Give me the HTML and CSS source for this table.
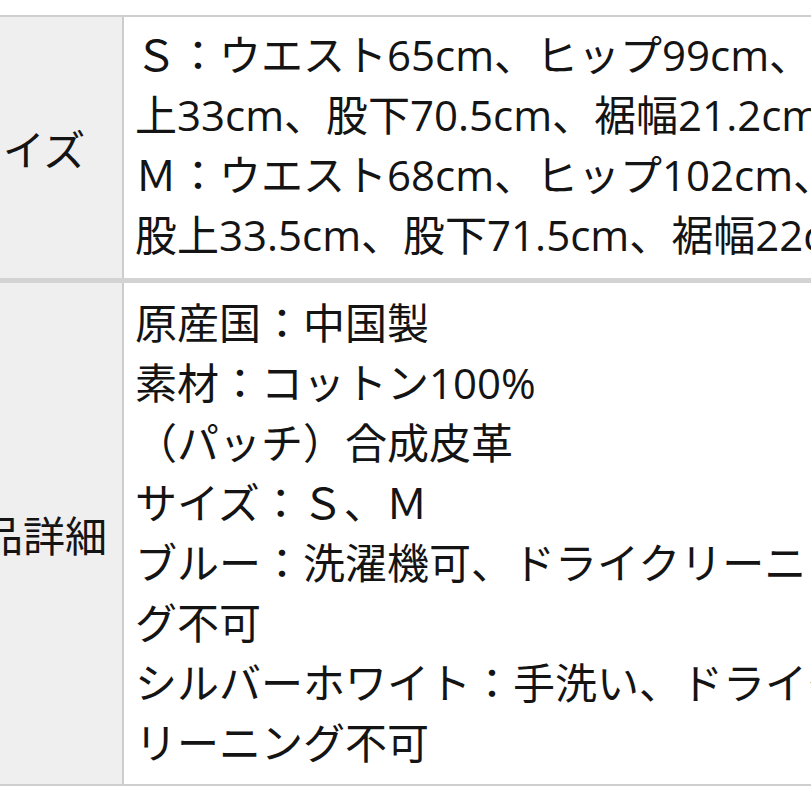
FILE: index.html
```html
<!DOCTYPE html>
<html lang="ja">
<head>
<meta charset="utf-8">
<title>商品情報</title>
<link rel="stylesheet" href="styles.css">
</head>
<body>
<div class="spec">
  <div class="row row-size">
    <div class="label">サイズ</div>
    <div class="value">
      <div class="line">Ｓ：ウエスト65cm、ヒップ99cm、股</div>
      <div class="line">上33cm、股下70.5cm、裾幅21.2cm、</div>
      <div class="line">Ｍ：ウエスト68cm、ヒップ102cm、</div>
      <div class="line">股上33.5cm、股下71.5cm、裾幅22cm</div>
    </div>
  </div>
  <div class="row row-detail">
    <div class="label">商品詳細</div>
    <div class="value">
      <div class="line">原産国：中国製</div>
      <div class="line">素材：コットン100%</div>
      <div class="line">（パッチ）合成皮革</div>
      <div class="line">サイズ：Ｓ、Ｍ</div>
      <div class="line">ブルー：洗濯機可、ドライクリーニン</div>
      <div class="line">グ不可</div>
      <div class="line">シルバーホワイト：手洗い、ドライク</div>
      <div class="line">リーニング不可</div>
    </div>
  </div>
</div>
</body>
</html>
```
FILE: styles.css
```css
html, body {
  margin: 0;
  padding: 0;
  background: #ffffff;
  overflow: hidden;
}

body {
  font-family: "Open Sans", "Noto Sans CJK JP", sans-serif;
  font-size: 42px;
  color: #141414;
}

.spec {
  margin: 15px 0 0 -76px;
  width: 1100px;
  border-top: 2px solid #cfcfcf;
}

.row {
  display: flex;
}

.row-size {
  border-bottom: 5px solid #d3d3d3;
}

.row-detail {
  border-bottom: 2px solid #cfcfcf;
}

.label {
  flex: 0 0 198px;
  background: #efefef;
  border-right: 2px solid #cdcdcd;
  display: flex;
  align-items: center;
  justify-content: center;
  white-space: nowrap;
  font-family: "Noto Sans CJK JP", sans-serif;
}

.value {
  flex: 1;
  padding: 8px 11px 13px;
  white-space: nowrap;
}

.row-detail .value {
  padding: 10px 11px 11px;
}

.line {
  height: 60px;
  line-height: 60px;
}
```
